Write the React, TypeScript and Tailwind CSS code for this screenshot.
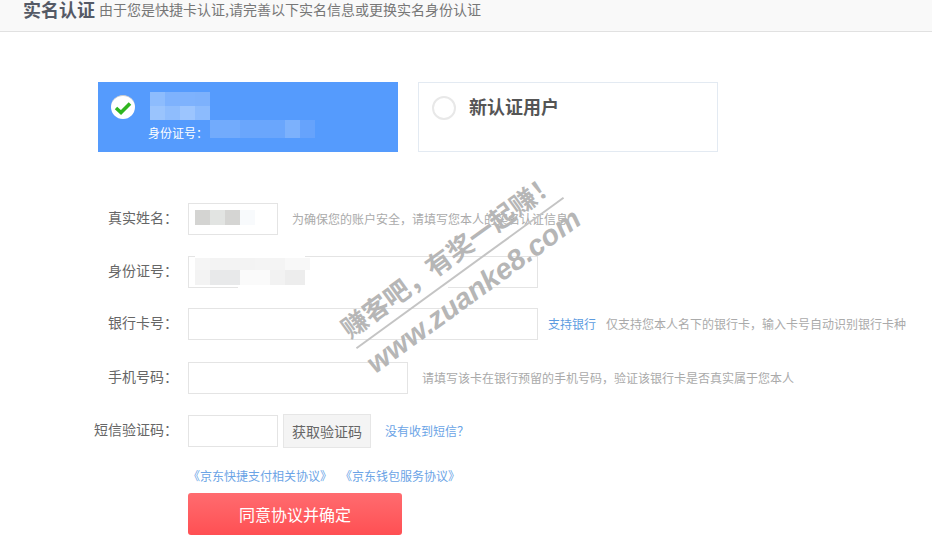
import React from 'react';

// blurred-out patch over an input or card
const Cell = ({ className }: { className: string }) => <div className={`h-full ${className}`} />;

const FormRow = ({ label, className = '', children }: { label: string; className?: string; children: React.ReactNode }) => (
  <div className={`flex items-center ${className}`}>
    <label className="mb-[5px] w-[178px] shrink-0 text-right text-sm leading-[20px] text-[#666]">{label}</label>
    <div className="ml-[10px] flex items-center">{children}</div>
  </div>
);

const TextBox = ({ className }: { className: string }) => (
  <div className={`h-[32px] border border-[#e4e4e4] bg-white ${className}`} />
);

const App = () => {
  return (
    <div
      className="relative h-[545px] w-[932px] overflow-hidden bg-white"
      style={{ fontFamily: '"Noto Sans CJK SC", "Noto Sans", sans-serif' }}
    >
      {/* Header */}
      <div className="flex h-[32px] items-start border-b border-[#e1e1e1] bg-[#f9f9f9] pl-[23px]">
        <span className="text-lg font-bold leading-[18px] text-[#555a66]">实名认证</span>
        <span className="ml-[4px] text-sm leading-[19px] text-[#777]">由于您是快捷卡认证,请完善以下实名信息或更换实名身份认证</span>
      </div>

      {/* Identity choice */}
      <div className="mt-[50px] flex gap-5 pl-[98px]">
        <div className="relative h-[70px] w-[300px] bg-[#559bfd]">
          <div className="absolute left-[13px] top-[13px] flex h-[24px] w-[24px] items-center justify-center rounded-full border-t border-[#ccc] bg-white">
            <svg width="18" height="14" viewBox="0 0 18 14" fill="none">
              <path d="M2 7 7 11.5 16 2.5" stroke="#2fb51f" strokeWidth="3.6" />
            </svg>
          </div>
          {/* blurred name */}
          <div className="absolute left-[52px] top-[10px] flex h-[14px] w-[60px] blur-[0.6px]">
            <Cell className="w-[15px] bg-[#8dbcfd]" />
            <Cell className="w-[15px] bg-[#7eb2fd]" />
            <Cell className="w-[15px] bg-[#7eb2fd]" />
            <Cell className="w-[15px] bg-[#7db1fc]" />
          </div>
          <div className="absolute left-[52px] top-[24px] flex h-[14px] w-[60px] blur-[0.6px]">
            <Cell className="w-[15px] bg-[#9ac4fd]" />
            <Cell className="w-[15px] bg-[#8fbdfd]" />
            <Cell className="w-[15px] bg-[#9cc5fe]" />
            <Cell className="w-[15px] bg-[#8cbbfd]" />
          </div>
          <span className="absolute left-[50px] top-[43px] text-xs leading-[16px] text-white">身份证号：</span>
          {/* blurred id number */}
          <div className="absolute left-[112px] top-[38px] flex h-[18px] w-[105px] blur-[0.6px]">
            <Cell className="w-[30px] bg-[#72abfc]" />
            <Cell className="w-[45px] bg-[#6aa6fc]" />
            <Cell className="w-[15px] bg-[#7cb1fc]" />
            <Cell className="w-[15px] bg-[#66a3fc]" />
          </div>
        </div>
        <div className="flex h-[70px] w-[300px] items-start border border-[#e3eaf2] bg-white pl-[13px] pt-[13px]">
          <div className="h-[24px] w-[24px] rounded-full border-2 border-[#e8e8e8]" />
          <span className="ml-[13px] text-lg font-bold leading-[20px] text-[#555]">新认证用户</span>
        </div>
      </div>

      {/* Form */}
      <div className="mt-[51px] flex flex-col">
        <FormRow label="真实姓名：" className="h-[32px]">
          <div className="relative">
            <TextBox className="w-[90px]" />
            <div className="absolute left-[7px] top-[7px] flex h-[15px] blur-[0.4px]">
              <Cell className="w-[15px] bg-[#d4d4d2]" />
              <Cell className="w-[15px] bg-[#e2e4e2]" />
              <Cell className="w-[15px] bg-[#d5d5d3]" />
              <Cell className="w-[15px] bg-[#f8fafc]" />
            </div>
          </div>
          <span className="ml-[14px] text-xs text-[#aaa]">为确保您的账户安全，请填写您本人的实名认证信息</span>
        </FormRow>

        <FormRow label="身份证号：" className="mt-[21px] h-[32px]">
          <div className="relative">
            <TextBox className="w-[350px]" />
            <div className="absolute -top-[1px] left-[7px] h-[5px] w-[110px] bg-white" />
            <div className="absolute left-[7px] top-[2px] flex h-[12px] blur-[0.6px]">
              <Cell className="w-[15px] bg-[#f5f5f5]" />
              <Cell className="w-[45px] bg-[#f3f3f3]" />
              <Cell className="w-[30px] bg-[#f4f4f4]" />
              <Cell className="w-[25px] bg-[#f8f8f8]" />
            </div>
            <div className="absolute left-[7px] top-[14px] flex h-[15px] blur-[0.6px]">
              <Cell className="w-[15px] bg-[#f3f3f3]" />
              <Cell className="w-[30px] bg-[#e8e9ea]" />
              <Cell className="w-[30px] bg-[#fafafa]" />
              <Cell className="w-[15px] bg-[#f2f2f2]" />
              <Cell className="w-[20px] bg-[#ededed]" />
            </div>
            <div className="absolute left-[50px] top-[29px] h-[4px] w-[210px] bg-white" />
          </div>
        </FormRow>

        <FormRow label="银行卡号：" className="mt-[20px] h-[32px]">
          <TextBox className="w-[350px]" />
          <span className="ml-[10px] text-xs text-[#5c9bdf]">支持银行</span>
          <span className="ml-[10px] text-xs text-[#aaa]">仅支持您本人名下的银行卡，输入卡号自动识别银行卡种</span>
        </FormRow>

        <FormRow label="手机号码：" className="mt-[22px] h-[32px]">
          <TextBox className="w-[220px]" />
          <span className="ml-[14px] text-xs text-[#aaa]">请填写该卡在银行预留的手机号码，验证该银行卡是否真实属于您本人</span>
        </FormRow>

        <FormRow label="短信验证码：" className="mt-[21px] h-[32px]">
          <TextBox className="w-[90px]" />
          <button className="ml-[5px] h-[34px] w-[88px] border border-[#e6e6e6] bg-[#f4f4f4] text-sm text-[#666]">获取验证码</button>
          <span className="ml-[14px] text-xs text-[#6ba4e6]">没有收到短信？</span>
        </FormRow>

        <div className="ml-[188px] mt-[20px] flex h-[18px] items-center gap-[8px] text-xs text-[#6ba4e6]">
          <span>《京东快捷支付相关协议》</span>
          <span>《京东钱包服务协议》</span>
        </div>

        <button className="ml-[188px] mt-[8px] h-[42px] w-[214px] rounded-[3px] bg-gradient-to-b from-[#ff6b6f] to-[#ff4f53] text-base text-white">
          同意协议并确定
        </button>
      </div>

      {/* Site watermark */}
      <div className="pointer-events-none absolute left-[332px] top-[236px] w-[256px] origin-center -rotate-[36deg] text-[#b6b6b6]">
        <div className="whitespace-nowrap text-center text-[26px] font-bold leading-[30px]">赚客吧，有奖一起赚！</div>
        <div className="my-[6px] h-[2px] bg-[#c4c4c4]" />
        <div
          className="whitespace-nowrap text-center text-[29px] font-bold italic leading-[30px]"
          style={{ fontFamily: '"Liberation Sans", sans-serif' }}
        >
          www.zuanke8.com
        </div>
      </div>
    </div>
  );
};

export default App;
